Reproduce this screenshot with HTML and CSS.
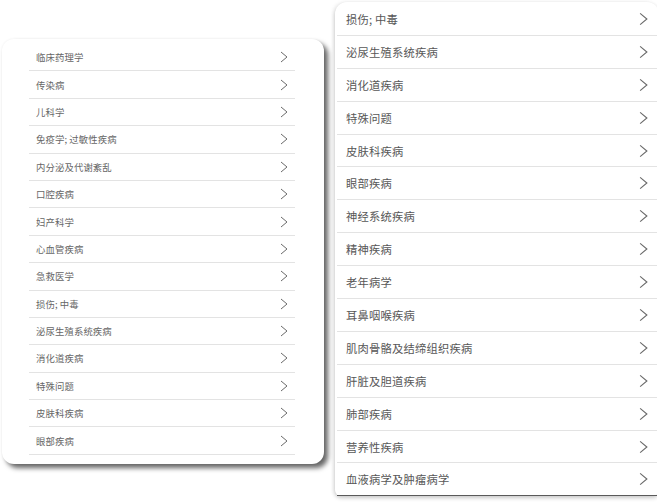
FILE: index.html
```html
<!DOCTYPE html>
<html lang="zh-CN">
<head>
  <meta charset="UTF-8">
  <meta name="viewport" content="width=device-width, initial-scale=1.0">
  <title>疾病分类</title>
  <link rel="stylesheet" href="styles.css">
</head>
<body>
  <div class="page">
    <ul class="card card-small">
      <li class="row"><span>临床药理学</span><svg class="chev" viewBox="0 0 8 12"><polyline points="1,1 7,6 1,11"/></svg></li>
      <li class="row"><span>传染病</span><svg class="chev" viewBox="0 0 8 12"><polyline points="1,1 7,6 1,11"/></svg></li>
      <li class="row"><span>儿科学</span><svg class="chev" viewBox="0 0 8 12"><polyline points="1,1 7,6 1,11"/></svg></li>
      <li class="row"><span>免疫学; 过敏性疾病</span><svg class="chev" viewBox="0 0 8 12"><polyline points="1,1 7,6 1,11"/></svg></li>
      <li class="row"><span>内分泌及代谢紊乱</span><svg class="chev" viewBox="0 0 8 12"><polyline points="1,1 7,6 1,11"/></svg></li>
      <li class="row"><span>口腔疾病</span><svg class="chev" viewBox="0 0 8 12"><polyline points="1,1 7,6 1,11"/></svg></li>
      <li class="row"><span>妇产科学</span><svg class="chev" viewBox="0 0 8 12"><polyline points="1,1 7,6 1,11"/></svg></li>
      <li class="row"><span>心血管疾病</span><svg class="chev" viewBox="0 0 8 12"><polyline points="1,1 7,6 1,11"/></svg></li>
      <li class="row"><span>急救医学</span><svg class="chev" viewBox="0 0 8 12"><polyline points="1,1 7,6 1,11"/></svg></li>
      <li class="row"><span>损伤; 中毒</span><svg class="chev" viewBox="0 0 8 12"><polyline points="1,1 7,6 1,11"/></svg></li>
      <li class="row"><span>泌尿生殖系统疾病</span><svg class="chev" viewBox="0 0 8 12"><polyline points="1,1 7,6 1,11"/></svg></li>
      <li class="row"><span>消化道疾病</span><svg class="chev" viewBox="0 0 8 12"><polyline points="1,1 7,6 1,11"/></svg></li>
      <li class="row"><span>特殊问题</span><svg class="chev" viewBox="0 0 8 12"><polyline points="1,1 7,6 1,11"/></svg></li>
      <li class="row"><span>皮肤科疾病</span><svg class="chev" viewBox="0 0 8 12"><polyline points="1,1 7,6 1,11"/></svg></li>
      <li class="row"><span>眼部疾病</span><svg class="chev" viewBox="0 0 8 12"><polyline points="1,1 7,6 1,11"/></svg></li>
    </ul>

    <ul class="card card-large">
      <li class="row"><span>损伤; 中毒</span><svg class="chev" viewBox="0 0 8 12"><polyline points="1,1 7,6 1,11"/></svg></li>
      <li class="row"><span>泌尿生殖系统疾病</span><svg class="chev" viewBox="0 0 8 12"><polyline points="1,1 7,6 1,11"/></svg></li>
      <li class="row"><span>消化道疾病</span><svg class="chev" viewBox="0 0 8 12"><polyline points="1,1 7,6 1,11"/></svg></li>
      <li class="row"><span>特殊问题</span><svg class="chev" viewBox="0 0 8 12"><polyline points="1,1 7,6 1,11"/></svg></li>
      <li class="row"><span>皮肤科疾病</span><svg class="chev" viewBox="0 0 8 12"><polyline points="1,1 7,6 1,11"/></svg></li>
      <li class="row"><span>眼部疾病</span><svg class="chev" viewBox="0 0 8 12"><polyline points="1,1 7,6 1,11"/></svg></li>
      <li class="row"><span>神经系统疾病</span><svg class="chev" viewBox="0 0 8 12"><polyline points="1,1 7,6 1,11"/></svg></li>
      <li class="row"><span>精神疾病</span><svg class="chev" viewBox="0 0 8 12"><polyline points="1,1 7,6 1,11"/></svg></li>
      <li class="row"><span>老年病学</span><svg class="chev" viewBox="0 0 8 12"><polyline points="1,1 7,6 1,11"/></svg></li>
      <li class="row"><span>耳鼻咽喉疾病</span><svg class="chev" viewBox="0 0 8 12"><polyline points="1,1 7,6 1,11"/></svg></li>
      <li class="row"><span>肌肉骨骼及结缔组织疾病</span><svg class="chev" viewBox="0 0 8 12"><polyline points="1,1 7,6 1,11"/></svg></li>
      <li class="row"><span>肝脏及胆道疾病</span><svg class="chev" viewBox="0 0 8 12"><polyline points="1,1 7,6 1,11"/></svg></li>
      <li class="row"><span>肺部疾病</span><svg class="chev" viewBox="0 0 8 12"><polyline points="1,1 7,6 1,11"/></svg></li>
      <li class="row"><span>营养性疾病</span><svg class="chev" viewBox="0 0 8 12"><polyline points="1,1 7,6 1,11"/></svg></li>
      <li class="row"><span>血液病学及肿瘤病学</span><svg class="chev" viewBox="0 0 8 12"><polyline points="1,1 7,6 1,11"/></svg></li>
    </ul>
  </div>
</body>
</html>
```

FILE: styles.css
```css
body {
  margin: 0;
  background: #fff;
  font-family: "Noto Sans CJK SC", "Noto Sans", sans-serif;
  overflow: hidden;
}

.page {
  display: flex;
  align-items: flex-start;
  width: 657px;
  height: 504px;
  overflow: hidden;
}

.card {
  list-style: none;
  margin: 0;
  background: #fff;
  box-sizing: border-box;
  flex-shrink: 0;
}

/* 左邊縮小的卡片 */
.card-small {
  width: 322px;
  margin: 39px 0 0 2px;
  padding: 5px 29px 9px 27px;
  border-radius: 12px;
  box-shadow: 4px 4px 5px rgba(0, 0, 0, 0.6), 0 0 3px rgba(0, 0, 0, 0.06);
}

/* 右邊放大的卡片 */
.card-large {
  width: 324px;
  margin: 2px 0 0 11px;
  padding: 1px 2px 0 2px;
  border-radius: 12px 12px 6px 6px;
  box-shadow: 0 2px 4px rgba(0, 0, 0, 0.2), -2px 0 4px rgba(0, 0, 0, 0.06);
}

.row {
  display: flex;
  align-items: center;
  justify-content: space-between;
  border-bottom: 1px solid #e3e3e3;
  box-sizing: border-box;
  color: #666;
}

.card-small .row {
  height: 27.4px;
  padding: 0 7px;
  font-size: 9.4px;
  letter-spacing: 0.1px;
}

.card-large .row {
  height: 32.9px;
  padding: 0 9px;
  font-size: 11.3px;
  letter-spacing: 0.2px;
  color: #575757;
}

.card-large .row:last-child {
  border-bottom-color: #5a5a5a;
}

.chev {
  fill: none;
  stroke: #6a6a6a;
  stroke-width: 1;
}

.card-small .chev {
  width: 8px;
  height: 12px;
}

.card-large .chev {
  width: 9px;
  height: 14px;
}
```
